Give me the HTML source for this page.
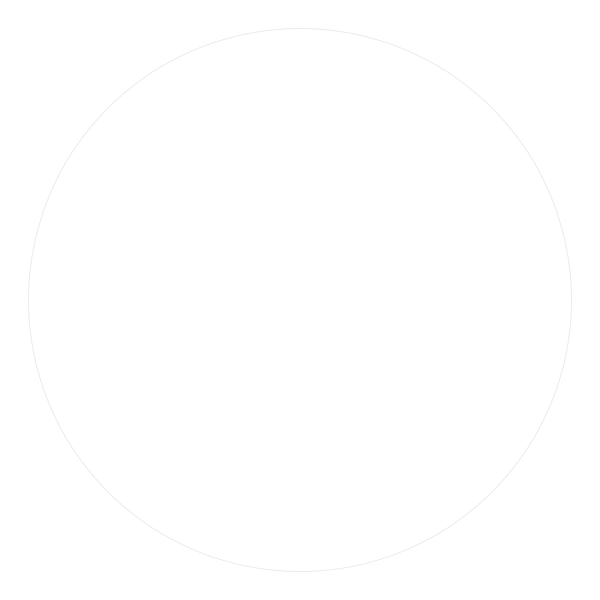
<!DOCTYPE html>
<html><head><style>html,body{margin:0;padding:0;background:#fff;width:600px;height:600px;overflow:hidden}</style></head>
<body><svg width="600" height="600" viewBox="0 0 600 600" style="display:block"><circle cx="300" cy="300" r="271.5" fill="#fff" stroke="#ebebeb" stroke-width="1"/></svg></body></html>
